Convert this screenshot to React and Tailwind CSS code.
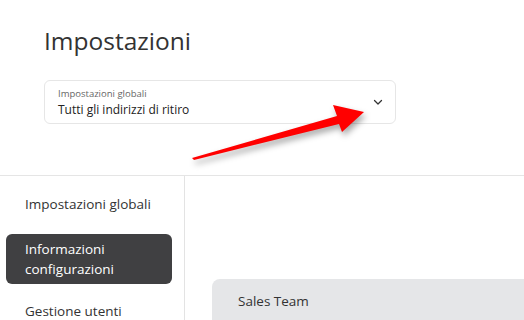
import React from 'react';

const sans = { fontFamily: '"Open Sans", "Noto Sans", sans-serif' };

const Arrow = () => (
  <svg
    className="absolute left-0 top-0 pointer-events-none"
    width="524"
    height="320"
    viewBox="0 0 524 320"
    style={{ filter: 'drop-shadow(2px 4px 3px rgba(0,0,0,0.35))' }}
  >
    <polygon
      points="192,158 337,116 333,105 364,112 342,132 339,124 194,160"
      fill="#ff0000"
    />
  </svg>
);

const Chevron = () => (
  <svg width="12" height="12" viewBox="0 0 24 24" fill="none" stroke="#333" strokeWidth="2.5" strokeLinecap="round" strokeLinejoin="round">
    <path d="M5 9l7 7 7-7" />
  </svg>
);

export default function App() {
  return (
    <div className="relative w-[524px] h-[320px] overflow-hidden bg-white text-[#333]" style={sans}>
      {/* Header */}
      <div className="h-[176px] border-b border-[#e5e5e5] pl-[44px] pt-[24px]">
        <h1 className="text-[24.5px] leading-[34px] text-[#333] font-normal">Impostazioni</h1>
        <div className="mt-[22px] w-[352px] h-[44px] rounded-[6px] border border-[#e6e6e6] flex items-center justify-between pl-[13px] pr-[11px]">
          <div className="flex flex-col">
            <span className="text-[9.5px] leading-[13px] text-[#666]">Impostazioni globali</span>
            <span className="text-[12px] leading-[17px] text-[#222] mt-[1px]">Tutti gli indirizzi di ritiro</span>
          </div>
          <Chevron />
        </div>
      </div>

      {/* Body */}
      <div className="flex h-[144px]">
        <div className="w-[185px] border-r border-[#e3e3e3] pl-[6px] pr-[12px] flex flex-col">
          <div className="pl-[19px] pt-[18px] pb-[20px] text-[13.5px] leading-[20px] text-[#333]">Impostazioni globali</div>
          <div className="rounded-[6px] bg-[#404042] text-white pl-[19px] py-[5px] text-[13.5px] leading-[20px] font-medium h-[51px]">
            Informazioni<br />configurazioni
          </div>
          <div className="pl-[19px] pt-[17px] text-[13.5px] leading-[20px] text-[#333]">Gestione utenti</div>
        </div>
        <div className="flex-1 pl-[27px] pt-[103px]">
          <div className="h-full rounded-tl-[8px] bg-[#e5e6e8] pl-[26px] pt-[12px] text-[13.5px] leading-[20px] text-[#333]">
            Sales Team
          </div>
        </div>
      </div>

      <Arrow />
    </div>
  );
}
